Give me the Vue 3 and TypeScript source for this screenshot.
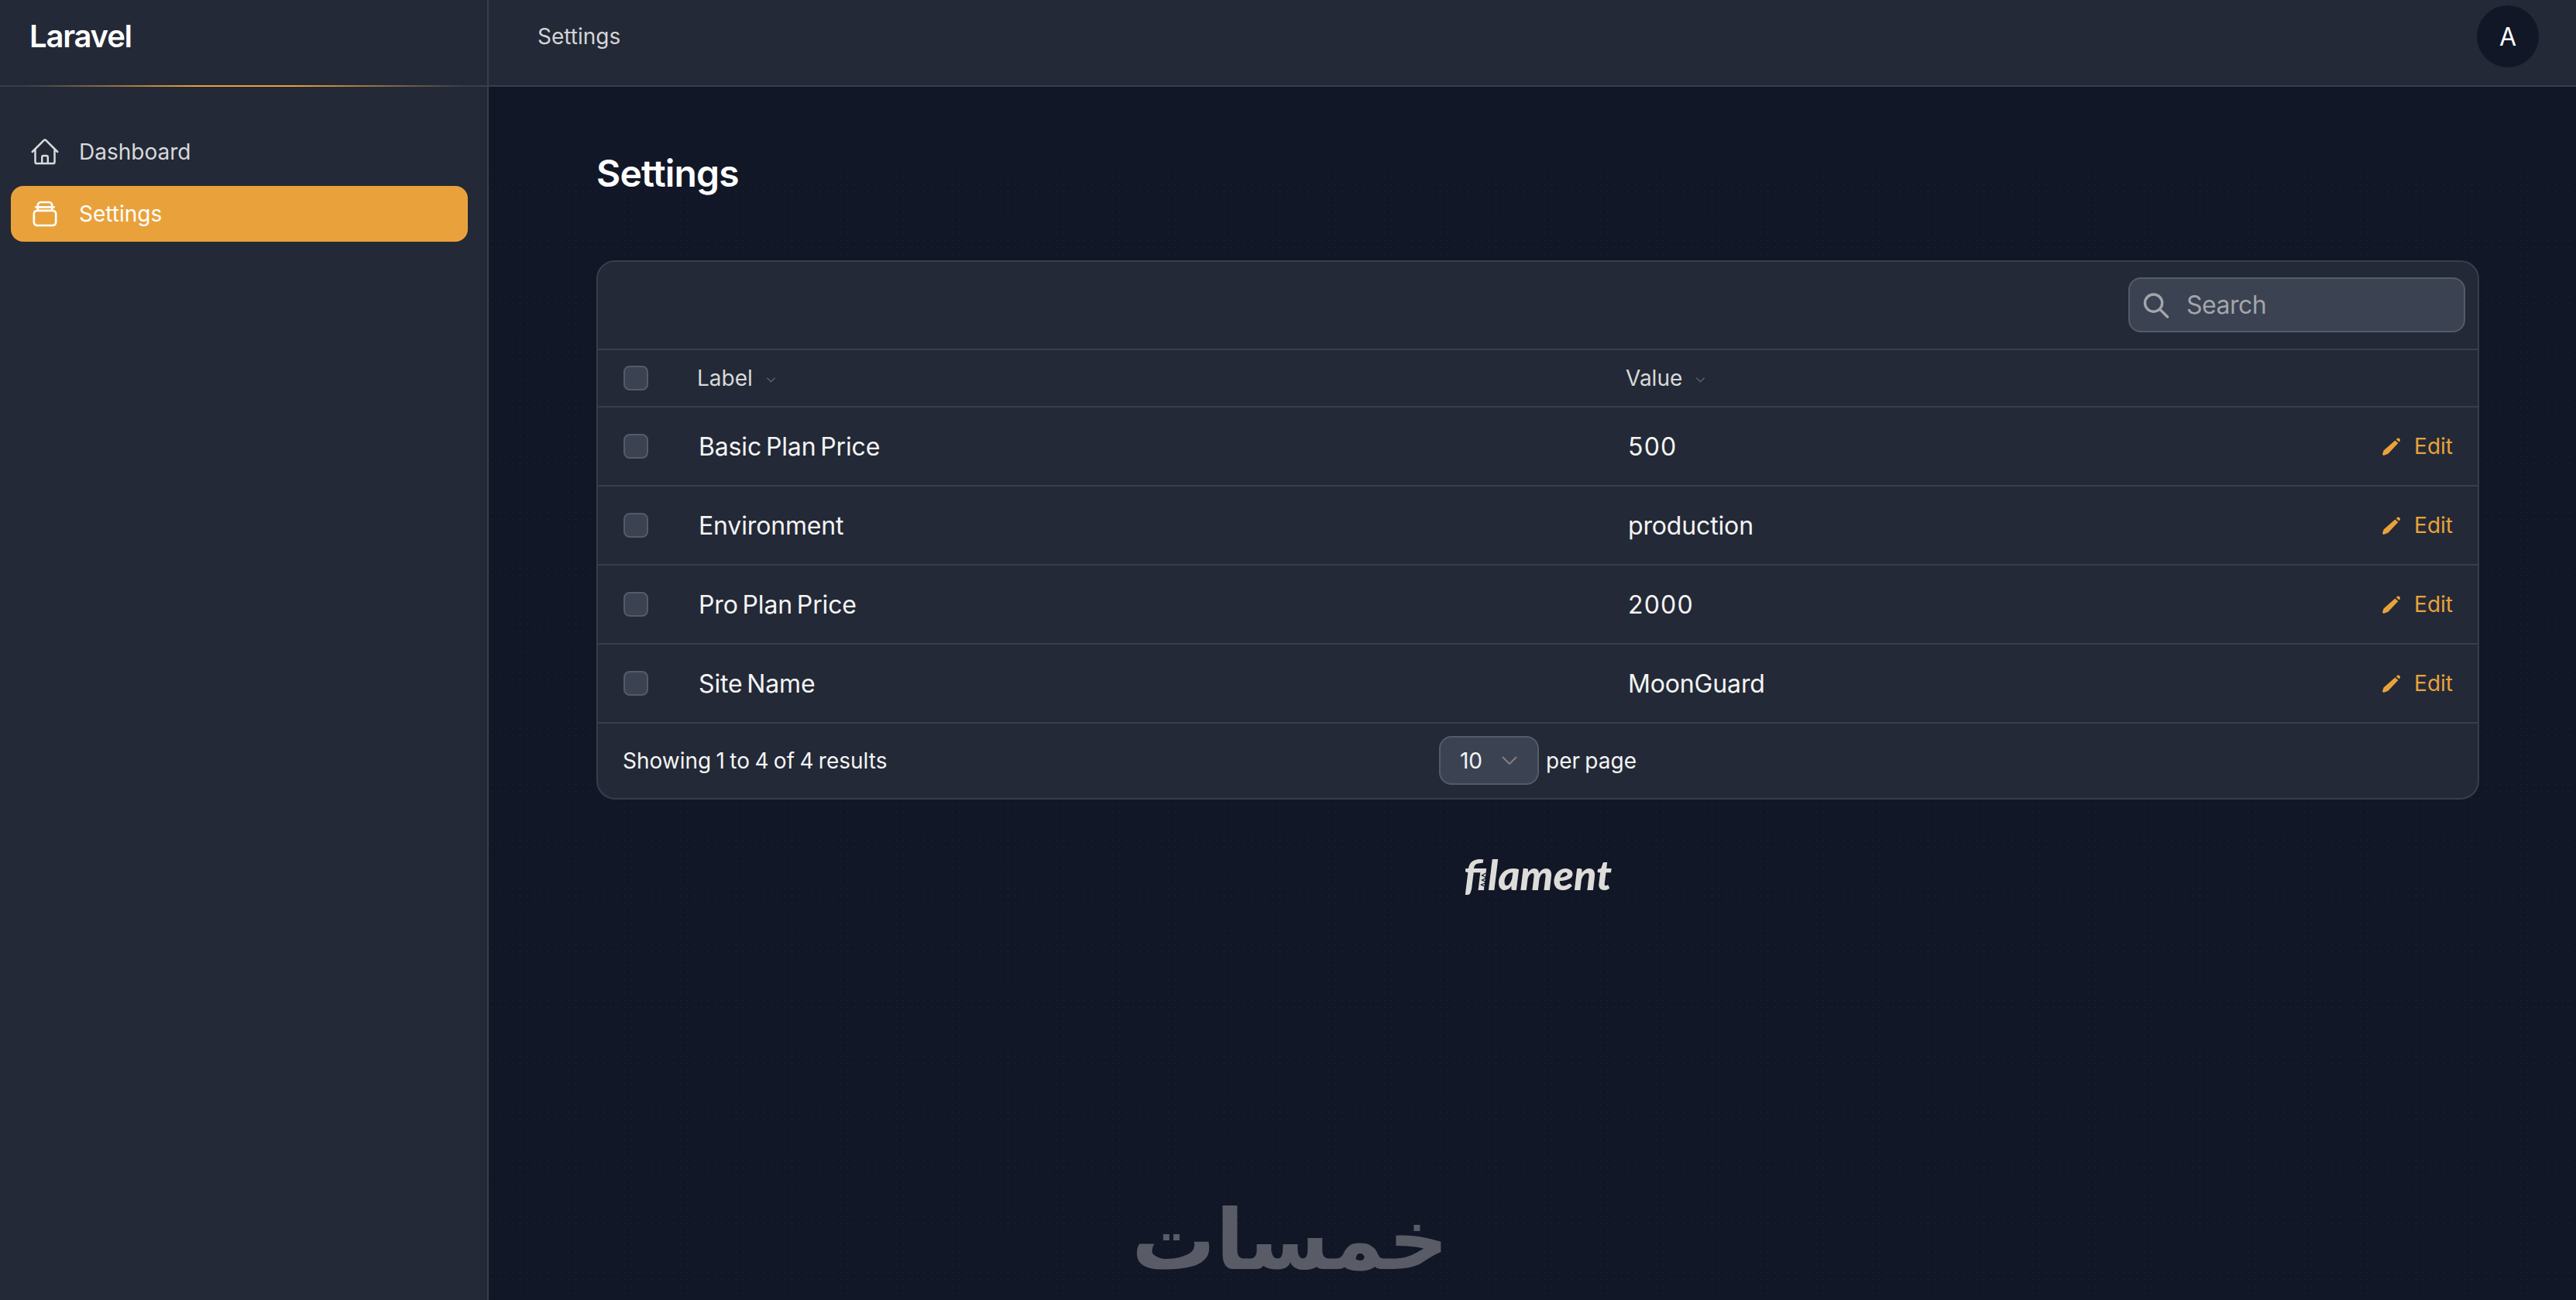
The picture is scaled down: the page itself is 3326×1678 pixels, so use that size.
<template>
  <div class="layout">
    <aside class="sidebar">
      <div class="brand">Laravel</div>
      <div class="brand-line"></div>
      <nav class="nav">
        <a class="nav-item">
          <svg viewBox="0 0 24 24" class="nav-icon" fill="none" stroke="currentColor" stroke-width="1.5" stroke-linecap="round" stroke-linejoin="round">
            <path d="M2.25 12l8.95-8.96a1.13 1.13 0 011.6 0L21.75 12M4.5 9.75v10.13c0 .62.5 1.12 1.13 1.12H9.75v-4.88c0-.62.5-1.12 1.13-1.12h2.25c.62 0 1.12.5 1.12 1.12V21h4.13c.62 0 1.12-.5 1.12-1.12V9.75M8.25 21h8.25" />
          </svg>
          <span>Dashboard</span>
        </a>
        <a class="nav-item active">
          <svg viewBox="0 0 24 24" class="nav-icon" fill="none" stroke="currentColor" stroke-width="1.6" stroke-linecap="round" stroke-linejoin="round">
            <path d="M6.5 9.5V5.5A2.5 2.5 0 019 3h6a2.5 2.5 0 012.5 2.5v4M5 6.8h14M3.5 12a2.5 2.5 0 012.5-2.5h12a2.5 2.5 0 012.5 2.5v6.5a2.5 2.5 0 01-2.5 2.5H6a2.5 2.5 0 01-2.5-2.5z" />
          </svg>
          <span>Settings</span>
        </a>
      </nav>
    </aside>

    <div class="main">
      <header class="topbar">
        <span class="crumb">Settings</span>
        <div class="avatar">A</div>
      </header>

      <main class="content">
        <h1 class="title">Settings</h1>

        <section class="card">
          <div class="toolbar">
            <label class="search">
              <svg viewBox="0 0 24 24" class="search-icon" fill="none" stroke="currentColor" stroke-width="2" stroke-linecap="round">
                <path d="M21 21l-5.2-5.2M17 10.5a6.5 6.5 0 11-13 0 6.5 6.5 0 0113 0z" transform="translate(-1.5 -1.2) scale(1.08)" />
              </svg>
              <span>Search</span>
            </label>
          </div>

          <div class="row head">
            <span class="checkbox"></span>
            <div class="col-label th">Label <svg class="sort" viewBox="0 0 14 9" fill="none" stroke="currentColor" stroke-width="1.6"><path d="M1.5 1.5L7 7l5.5-5.5" /></svg></div>
            <div class="col-value th">Value <svg class="sort" viewBox="0 0 14 9" fill="none" stroke="currentColor" stroke-width="1.6"><path d="M1.5 1.5L7 7l5.5-5.5" /></svg></div>
          </div>

          <div v-for="item in settings" :key="item.label" class="row body">
            <span class="checkbox"></span>
            <div class="col-label td">{{ item.label }}</div>
            <div class="col-value td" :class="{ num: /^\d+$/.test(item.value) }">{{ item.value }}</div>
            <a class="edit">
              <svg viewBox="0 0 23 23" class="edit-icon" fill="currentColor">
                <path d="M19.6.6a2.6 2.6 0 013.2 3.4l-1.1 1.6-3.9-3.3zM16.4 3.6l4 3.3L7.4 20.8 1.6 23 0 21.4l1.6-5z" />
              </svg>
              <span>Edit</span>
            </a>
          </div>

          <footer class="card-foot">
            <span class="results">Showing 1 to 4 of 4 results</span>
            <div class="per-page">
              <div class="select">
                <span>10</span>
                <svg viewBox="0 0 20 11" fill="none" stroke="currentColor" stroke-width="2"><path d="M1 1l9 9 9-9" /></svg>
              </div>
              <span class="per-label">per page</span>
            </div>
          </footer>
        </section>

        <div class="filament-wrap">
          <div class="filament">filament<svg viewBox="0 0 10 24" fill="none" stroke="#111726" stroke-width="1.3"><path d="M8 2L3 5l6 3-6 3 6 3-7 3 6 3" /></svg></div>
        </div>
      </main>

      <div class="watermark">خمسات</div>
    </div>
  </div>
</template>

<script setup lang="ts">
const settings = [
  { label: 'Basic Plan Price', value: '500' },
  { label: 'Environment', value: 'production' },
  { label: 'Pro Plan Price', value: '2000' },
  { label: 'Site Name', value: 'MoonGuard' },
]
</script>

<style>
html, body { margin: 0; background: #111827; }
</style>

<style scoped>
.layout { display: flex; width: 3326px; height: 1678px; overflow: hidden; font-family: "Inter", "Liberation Sans", sans-serif; color: #fff; background-color: #111726; }
.sidebar { width: 629px; flex: none; background: #232936; border-right: 2px solid #373e4c; }
.brand { height: 110px; box-sizing: border-box; padding: 22px 0 0 38px; font-size: 40px; line-height: 50px; font-weight: 600; letter-spacing: -1.2px; }
.brand-line { height: 2px; background: linear-gradient(90deg, #373e4c 5%, #e9a23b 40%, #e9a23b 60%, #373e4c 95%); }
.nav { padding: 48px 25px 0 14px; display: flex; flex-direction: column; gap: 8px; }
.nav-item { display: flex; align-items: center; height: 72px; padding: 0 24px; gap: 24px; border-radius: 16px; font-size: 28px; color: #d8d9db; }
.nav-item.active { background: #e9a23b; color: #fff; }
.nav-icon { width: 40px; height: 40px; flex: none; }

.main { flex: 1; position: relative; min-width: 0; background-image: linear-gradient(#111726 150px, rgba(17, 23, 38, 0) 240px), radial-gradient(rgba(255, 255, 255, .08) .8px, transparent 1px); background-size: auto, 9px 9px; }
.topbar { box-sizing: border-box; display: flex; justify-content: space-between; align-items: flex-start; padding: 7px 48px 0 63px; background: #232936; border-bottom: 2px solid #373e4c; height: 112px; }
.crumb { font-size: 28px; line-height: 80px; color: #d4d5d8; }
.avatar { width: 80px; height: 80px; border-radius: 50%; background: #111726; display: flex; align-items: center; justify-content: center; font-size: 32px; }

.content { padding: 0 125px 0 139px; }
.title { margin: 0; padding-top: 81px; font-size: 48px; line-height: 62px; font-weight: 600; letter-spacing: -.8px; }

.card { margin-top: 81px; background: #232936; border: 2px solid #373e4c; border-radius: 24px; box-sizing: border-box; height: 696px; }
.toolbar { height: 112px; box-sizing: border-box; padding: 20px 16px 0 0; display: flex; justify-content: flex-end; }
.search { width: 435px; height: 71px; box-sizing: border-box; display: flex; align-items: center; gap: 20px; padding-left: 15px; background: #3b4252; border: 2px solid #565b67; border-radius: 16px; font-size: 32px; letter-spacing: -.5px; color: #a3a5aa; }
.search-icon { width: 38px; height: 38px; flex: none; }

.row { display: flex; align-items: center; border-top: 2px solid #373e4c; position: relative; padding-left: 33px; }
.head { height: 74px; box-sizing: border-box; }
.body { height: 102px; box-sizing: border-box; }
.checkbox { width: 32px; height: 32px; flex: none; box-sizing: border-box; background: #3b4252; border: 2px solid #565b67; border-radius: 8px; }
.col-label { width: 1200px; flex: none; }
.col-value { flex: 1; }
.th { font-size: 28px; color: #d8d9db; }
.head .col-label { margin-left: 63px; width: 1199px; }
.td { font-size: 32px; color: #f4f4f5; word-spacing: -3px; letter-spacing: -.15px; }
.td.num { letter-spacing: 1.2px; }
.body .col-label { margin-left: 65px; }
.sort { width: 13px; height: 9px; margin-left: 9px; color: #5b606b; vertical-align: 3px; }
.edit { position: absolute; right: 32px; top: 0; bottom: 0; display: flex; align-items: center; gap: 18px; font-size: 28px; color: #e9a23b; }
.edit-icon { width: 23px; height: 23px; }

.card-foot { border-top: 2px solid #373e4c; height: 97px; box-sizing: border-box; display: grid; grid-template-columns: 1fr auto 1fr; align-items: center; padding: 0 32px; font-size: 28px; color: #f4f4f5; word-spacing: -1.5px; }
.per-page { display: flex; align-items: center; gap: 9px; grid-column: 2; }
.select { width: 129px; height: 63px; box-sizing: border-box; display: flex; align-items: center; justify-content: space-between; padding: 0 26px 0 25px; background: #3b4252; border: 2px solid #565b67; border-radius: 16px; }
.select svg { width: 20px; height: 11px; color: #857f78; }

.filament-wrap { margin-top: 67px; display: flex; justify-content: center; }
.filament { position: relative; font-size: 54px; line-height: 60px; font-weight: 900; font-style: italic; color: #dddcd9; font-family: "Lato", sans-serif; }
.filament svg { position: absolute; left: 20px; bottom: 10px; width: 11px; height: 24px; }
.watermark { position: absolute; left: 830px; top: 1536px; font-family: "DejaVu Sans", sans-serif; font-weight: 700; font-size: 108px; line-height: 130px; color: #595c66; }
</style>
